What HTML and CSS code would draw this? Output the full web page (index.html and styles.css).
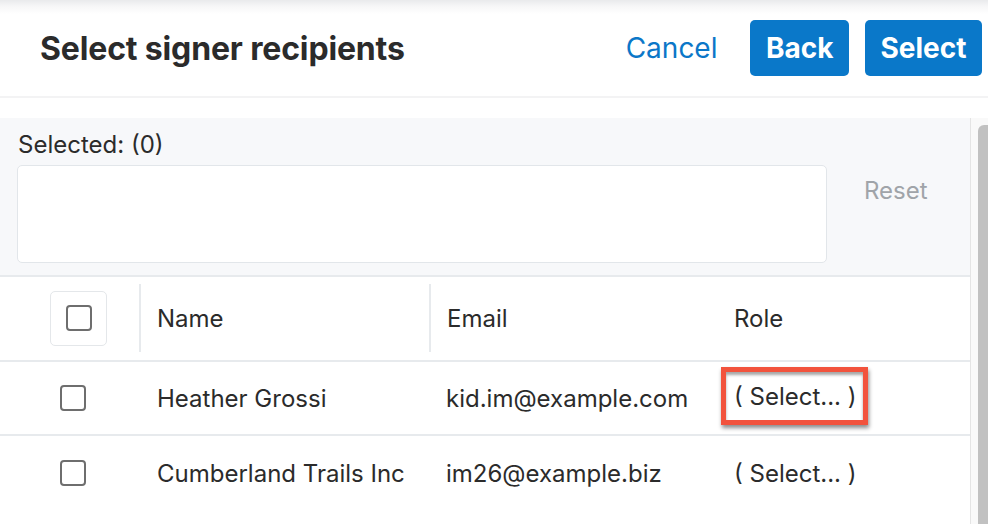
FILE: index.html
```html
<!DOCTYPE html>
<html lang="en">
<head>
<meta charset="utf-8">
<title>Select signer recipients</title>
<link rel="stylesheet" href="styles.css">
</head>
<body>
<header class="topbar">
  <h1 class="title">Select signer recipients</h1>
  <div class="actions">
    <a class="link-btn">Cancel</a>
    <button class="btn">Back</button>
    <button class="btn">Select</button>
  </div>
</header>
<div class="spacer"></div>
<div class="main">
  <div class="content">
    <section class="panel">
      <div class="panel-label">Selected: (0)</div>
      <div class="panel-row">
        <div class="selbox"></div>
        <span class="reset">Reset</span>
      </div>
    </section>
    <div class="table">
      <div class="row head">
        <div class="cell c-check"><span class="check-wrap"><span class="checkbox"></span></span></div>
        <div class="cell c-name"><span class="hdr divided">Name</span></div>
        <div class="cell c-email"><span class="hdr divided">Email</span></div>
        <div class="cell c-role"><span class="hdr">Role</span></div>
      </div>
      <div class="row">
        <div class="cell c-check row-check"><span class="checkbox"></span></div>
        <div class="cell c-name pad">Heather Grossi</div>
        <div class="cell c-email pad">kid.im@example.com</div>
        <div class="cell c-role pad hl-cell"><span class="highlight">( Select... )</span></div>
      </div>
      <div class="row last">
        <div class="cell c-check row-check"><span class="checkbox"></span></div>
        <div class="cell c-name pad">Cumberland Trails Inc</div>
        <div class="cell c-email pad">im26@example.biz</div>
        <div class="cell c-role pad">( Select... )</div>
      </div>
    </div>
  </div>
  <div class="scrollbar"><div class="thumb"></div></div>
</div>
</body>
</html>
```
FILE: styles.css
```css
* { box-sizing: border-box; }
html, body { margin: 0; padding: 0; }
body {
  width: 988px;
  height: 524px;
  overflow: hidden;
  background: #fff;
  font-family: Inter, "Liberation Sans", sans-serif;
  color: #2b2b2b;
}
.topbar {
  height: 98px;
  display: flex;
  align-items: center;
  justify-content: space-between;
  padding: 0 6px 0 40px;
  background: linear-gradient(#e9eaec 0px, #f6f6f7 6px, #fff 14px);
  border-bottom: 2px solid #f3f3f4;
}
.title {
  margin: 0;
  font-size: 32px;
  font-weight: 700;
  color: #2b2b2b;
  letter-spacing: -0.15px;
}
.actions {
  display: flex;
  align-items: center;
}
.link-btn {
  font-size: 28px;
  color: #0b77c8;
  margin-right: 17px;
}
.btn {
  height: 56px;
  padding: 0 15.5px;
  border: none;
  border-radius: 5px;
  background: #0a78c9;
  color: #fff;
  font-family: Inter, "Liberation Sans", sans-serif;
  font-size: 28px;
  font-weight: 700;
  margin-left: 16px;
}
.spacer { height: 20px; }
.main {
  display: flex;
  height: 406px;
}
.content {
  width: 971px;
  border-right: 1px solid #e4e4e4;
}
.scrollbar {
  flex: 1;
  background: #f9f9f9;
  padding: 7px 0 0 7px;
}
.thumb {
  height: 100%;
  background: #c1c1c1;
  border-radius: 6px 0 0 0;
}
.panel {
  background: #f7f8fa;
  border-bottom: 2px solid #e7eaed;
  padding: 12px 0 12px 17px;
}
.panel-label {
  font-size: 24px;
  line-height: 30px;
  padding-left: 1px;
  margin-bottom: 5px;
}
.panel-row {
  display: flex;
  align-items: flex-start;
}
.selbox {
  width: 810px;
  height: 98px;
  background: #fff;
  border: 1.5px solid #e2e6ea;
  border-radius: 5px;
}
.reset {
  margin-left: 37px;
  margin-top: 11px;
  font-size: 24px;
  line-height: 30px;
  color: #a0a4a9;
}
.table { font-size: 24px; }
.row {
  display: grid;
  grid-template-columns: 139px 290px 288px 1fr;
  height: 74px;
  border-bottom: 2px solid #e7eaed;
  align-items: center;
}
.row.head {
  height: 85px;
  align-items: stretch;
}
.row.last { border-bottom: none; }
.cell { display: flex; align-items: center; white-space: nowrap; }
.head .cell { padding: 7px 0 8px; }
.hdr {
  display: flex;
  align-items: center;
  height: 100%;
  width: 100%;
  padding-left: 18px;
}
.hdr.divided { border-left: 2px solid #e7eaed; padding-left: 17px; }
.c-name .hdr.divided { padding-left: 16px; }
.c-email .hdr.divided { padding-left: 16px; }
.c-role .hdr { padding-left: 17px; }
.c-check .check-wrap {
  margin-left: 50px;
  width: 57px;
  height: 55px;
  border: 1.5px solid #e4e7ea;
  border-radius: 5px;
  display: flex;
  align-items: center;
  justify-content: center;
}
.checkbox {
  display: block;
  width: 26px;
  height: 26px;
  border: 2px solid #6e6e6e;
  border-radius: 4px;
  background: #fff;
}
.row-check { padding-left: 60px; }
.pad { padding-left: 18px; }
.c-email.pad { padding-left: 17px; }
.c-role.pad { padding-left: 17px; }
.c-role.hl-cell { padding-left: 4px; }
.highlight {
  display: inline-block;
  white-space: nowrap;
  border: 5px solid #f2533d;
  padding: 10px 6px 8px 8px;
  line-height: 30px;
  box-shadow: 1px 3px 4px rgba(0,0,0,0.45), inset 0 3px 3px rgba(0,0,0,0.35);
  margin-top: -4px;
}
```
